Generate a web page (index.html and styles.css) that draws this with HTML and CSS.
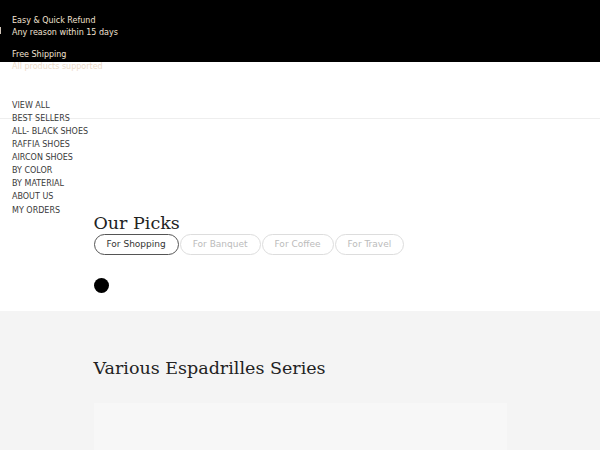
FILE: index.html
```html
<!DOCTYPE html>
<html lang="en">
<head>
    <meta charset="UTF-8">
    <meta name="viewport" content="width=device-width, initial-scale=1.0">
    <title>Espadrilles</title>
    <link rel="stylesheet" href="styles.css">
</head>
<body>
    <!-- Promo bar -->
    <div class="topbar">
        <div class="promo">
            <p>Easy &amp; Quick Refund</p>
            <p>Any reason within 15 days</p>
        </div>
        <div class="promo">
            <p>Free Shipping</p>
            <p class="faded">All products supported</p>
        </div>
    </div>

    <!-- Header / menu -->
    <header class="header">
        <ul class="menu">
            <li>VIEW ALL</li>
            <li>BEST SELLERS</li>
            <li>ALL- BLACK SHOES</li>
            <li>RAFFIA SHOES</li>
            <li>AIRCON SHOES</li>
            <li>BY COLOR</li>
            <li>BY MATERIAL</li>
            <li>ABOUT US</li>
            <li class="orders">MY ORDERS</li>
        </ul>
    </header>

    <!-- Picks -->
    <section class="picks">
        <div class="wrap">
            <h2>Our Picks</h2>
            <div class="tabs">
                <button class="tab active">For Shopping</button>
                <button class="tab">For Banquet</button>
                <button class="tab">For Coffee</button>
                <button class="tab">For Travel</button>
            </div>
            <div class="dot"></div>
        </div>
    </section>

    <!-- Series -->
    <section class="series">
        <div class="wrap">
            <h2>Various Espadrilles Series</h2>
            <div class="series-box"></div>
        </div>
    </section>
</body>
</html>
```

FILE: styles.css
```css
* {
    box-sizing: border-box;
}
body {
    margin: 0;
    font-family: "DejaVu Sans", sans-serif;
    background: #fff;
    overflow: hidden;
}
p {
    margin: 0;
}
.topbar {
    position: relative;
    height: 62px;
    background: #000;
    color: #f1e2d2;
    font-size: 8px;
    line-height: 12px;
    padding: 15px 12px 0;
}
.topbar::before {
    content: "";
    position: absolute;
    left: 0;
    top: 27px;
    width: 1px;
    height: 7px;
    background: #cfc4b8;
}
.promo {
    margin-bottom: 10px;
}
.promo .faded {
    color: #ecdac7;
}
.header {
    height: 57px;
    padding: 37px 12px 0;
    border-bottom: 1px solid #eeeeee;
}
.menu {
    list-style: none;
    margin: 0;
    padding: 0;
    font-size: 8px;
    line-height: 13px;
    color: #3a3a3a;
}
.menu .orders {
    margin-top: 1px;
}
.wrap {
    width: 413px;
    margin: 0 auto;
}
h2 {
    margin: 0;
    font-family: "DejaVu Serif", serif;
    font-weight: normal;
    font-size: 17.5px;
    color: #222;
}
.picks {
    padding: 94px 0 18px;
}
.tabs {
    display: flex;
    gap: 1px;
    margin-top: 1px;
}
.tab {
    font-family: "DejaVu Sans", sans-serif;
    font-size: 9px;
    line-height: 11px;
    padding: 4px 12px;
    border: 1px solid #dddddd;
    border-radius: 12px;
    background: #fff;
    color: #bbbbbb;
    cursor: pointer;
}
.tab.active {
    border-color: #555;
    color: #333;
}
.dot {
    width: 15px;
    height: 15px;
    margin-top: 23px;
    border-radius: 50%;
    background: #000;
}
.series {
    background: #f4f4f4;
    padding-top: 47px;
    height: 300px;
}
.series-box {
    margin-top: 25px;
    height: 200px;
    background: #f7f7f7;
}
```
